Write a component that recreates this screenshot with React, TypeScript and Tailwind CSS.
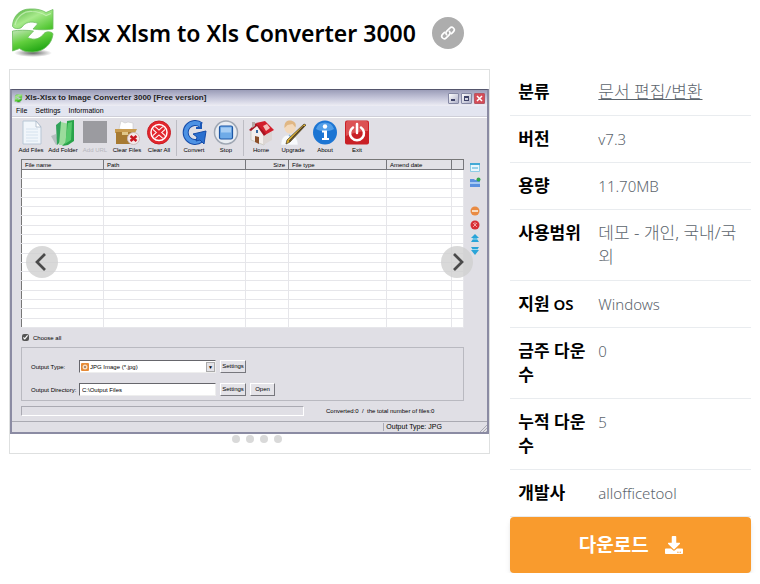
import React from 'react';
import { FaDownload } from 'react-icons/fa';

const RefreshLogo: React.FC<{ className: string; id: string }> = ({ className, id }) => (
  <svg viewBox="0 0 44 50" className={className} aria-hidden="true">
    <defs>
      <linearGradient id={`${id}-top`} x1="0" y1="0" x2="1" y2="1">
        <stop offset="0" stopColor="#4fae3c" />
        <stop offset="0.45" stopColor="#a8ea8c" />
        <stop offset="1" stopColor="#3fbf1f" />
      </linearGradient>
      <linearGradient id={`${id}-bottom`} x1="0" y1="0" x2="0.6" y2="1">
        <stop offset="0" stopColor="#c2e6b8" />
        <stop offset="0.5" stopColor="#62cf3e" />
        <stop offset="1" stopColor="#1fa512" />
      </linearGradient>
      <radialGradient id={`${id}-shadow`}>
        <stop offset="0" stopColor="#333" stopOpacity="0.75" />
        <stop offset="1" stopColor="#333" stopOpacity="0" />
      </radialGradient>
    </defs>
    <ellipse cx="22" cy="45" rx="19" ry="4" fill={`url(#${id}-shadow)`} />
    <path d="M1.500 18C2 8 9 1 19 1c7-.4 12 1 16 3.500l7-3V21c-6 1-14 1-20 0l5-5.500c-7-3-13-1-16 3.500-2 2.500-9 2-9.500-1z" fill={`url(#${id}-top)`} stroke="#6cbd5e" strokeWidth="0.8" />
    <path d="M42 26C41 36 33 43.500 22 44c-6 .2-10-1-13.500-3.500L1.500 43V23c6-1 14-1 21 0l-6 6.500c7 3.500 13 1 16.500-4 2-2.500 8.500-2 9 .5z" fill={`url(#${id}-bottom)`} stroke="#6cbd5e" strokeWidth="0.8" />
    <path d="M4 17C6 8 13 3 21 3.500c6 .2 10 1.500 14 4l5-2" fill="none" stroke="#d2f5c4" strokeWidth="1.200" opacity="0.7" />
  </svg>
);

const AddFilesIcon = () => (
  <svg viewBox="0 0 26 26" className="size-[26px]">
    <path d="M5 1h13l5 6v17H5z" fill="#f1f6fb" stroke="#b8c7d6" />
    <path d="M18 1v6h5z" fill="#fff" stroke="#a8b8c8" strokeWidth="0.8" />
    <path d="M8 9h12M8 12h12M8 15h12M8 18h12M8 21h12" stroke="#d5e2ee" />
  </svg>
);

const AddFolderIcon = () => (
  <svg viewBox="0 0 26 26" className="size-[26px]">
    <path d="M1 16l5-2 3 10-3 1z" fill="#b5bec0" />
    <path d="M6 5l5-4v20l-4 4z" fill="#31a35a" />
    <path d="M11 2l8 2-3 21H9z" fill="#9bdc9c" />
    <path d="M17 1l7-1v21l-6 4-6 1 4-4z" fill="#29a34a" />
    <path d="M18 3l4-1-1 18-6 4z" fill="#56c96c" />
  </svg>
);

const AddUrlIcon = () => (
  <svg viewBox="0 0 26 26" className="size-[26px]">
    <path d="M1 1h24v22H1z" fill="#9b9ba0" />
  </svg>
);

const ClearFilesIcon = () => (
  <svg viewBox="0 0 26 26" className="size-[26px]">
    <path d="M5 9l2-8 4 2 3-1 5 1v8z" fill="#fff" stroke="#c8c8c8" strokeWidth="0.600" />
    <path d="M1 9h22l-2 4H1z" fill="#c99c50" />
    <path d="M2 12h19v12H2z" fill="#a77a32" />
    <path d="M8 12h6v3H8z" fill="#e1c78a" />
    <circle cx="19.500" cy="18.500" r="6" fill="#f4e8e8" stroke="#cbb" />
    <path d="M16.500 16l6 5M22.500 16l-6 5" stroke="#c91520" strokeWidth="2.500" />
  </svg>
);

const ClearAllIcon = () => (
  <svg viewBox="0 0 26 26" className="size-[26px]">
    <circle cx="13" cy="12.500" r="11.500" fill="#e3262d" stroke="#c81e25" />
    <circle cx="13" cy="12.500" r="8" fill="none" stroke="#fff" strokeWidth="1.500" />
    <path d="M8 8l10 9M18 8L8 17" stroke="#fff" strokeWidth="4.500" />
    <path d="M8 8l10 9M18 8L8 17" stroke="#e3262d" strokeWidth="2.500" />
  </svg>
);

const ConvertIcon = () => (
  <svg viewBox="0 0 26 26" className="size-[26px]">
    <path d="M20 5A9.500 9.500 0 1 0 20 20" fill="none" stroke="#164ca9" strokeWidth="6" />
    <path d="M20 5A9.500 9.500 0 1 0 20 20" fill="none" stroke="#4d92e4" strokeWidth="4" />
    <path d="M12 14l13-3-2 13-4-4-4 1 1-4z" fill="#2b70cf" stroke="#164ca9" />
    <path d="M20 3v5h-5" fill="none" stroke="#1b57b6" strokeWidth="2" />
  </svg>
);

const StopIcon = () => (
  <svg viewBox="0 0 26 26" className="size-[26px]">
    <circle cx="13" cy="12.500" r="11.500" fill="#e9edf2" stroke="#9fa7b3" strokeWidth="1.500" />
    <rect x="6.500" y="6" width="13" height="13" rx="1.500" fill="#6fabe8" stroke="#1d57a5" strokeWidth="1.200" />
    <path d="M8 7.500h10v5H8z" fill="#a6cdf4" />
  </svg>
);

const HomeIcon = () => (
  <svg viewBox="0 0 26 26" className="size-[26px]">
    <path d="M3 10l6-6 7 8v13L3 20z" fill="#f3efed" stroke="#bba" strokeWidth="0.600" />
    <path d="M15 14l9-4v10l-9 5z" fill="#dcd6d4" />
    <path d="M8 3l9-2 9 9-9 5z" fill="#d21f2c" />
    <path d="M8 3L1 10l2 1 6-5 7 10 2-2z" fill="#a81521" />
    <path d="M15 6l4-2 3 4-4 3z" fill="#f5c0ba" />
    <path d="M4 2h3v4L4 8z" fill="#b5aaa6" />
    <path d="M7 16l4 1v7l-4-2z" fill="#8b4e28" />
    <path d="M8 10h2v3H8z" fill="#396ba0" />
  </svg>
);

const UpgradeIcon = () => (
  <svg viewBox="0 0 26 26" className="size-[26px]">
    <path d="M1 25c0-7 3-10 8-10s9 3 9 10z" fill="#f8fafc" stroke="#dde3e8" strokeWidth="0.600" />
    <circle cx="10" cy="8" r="5.500" fill="#f3d9bb" />
    <path d="M4.500 8C4 2 7 .5 10 .5s7 2 5.500 7l-3-3.500-5 1z" fill="#e0b784" />
    <path d="M9 15l2 2-1 4" fill="none" stroke="#8dbbe0" strokeWidth="1.500" />
    <path d="M26 5L10 22l-4 2 1-4L24 4z" fill="#e9ba31" stroke="#3e3424" strokeWidth="0.700" />
    <path d="M24 6L9 21.500" stroke="#493b2a" strokeWidth="1.200" />
  </svg>
);

const AboutIcon = () => (
  <svg viewBox="0 0 26 26" className="size-[26px]">
    <circle cx="13" cy="12.500" r="12" fill="#1c75d3" />
    <path d="M4 9a9.500 9.500 0 0 1 18 0c-5 3-13 3-18 0z" fill="#5fa9ee" opacity="0.8" />
    <circle cx="13" cy="6.500" r="2.200" fill="#fff" />
    <path d="M10 10.500h5V18h2v2h-7v-2h2v-5.500h-2z" fill="#fff" />
  </svg>
);

const ExitIcon = () => (
  <svg viewBox="0 0 26 26" className="size-[26px]">
    <rect x="1" y="0.500" width="24" height="24" rx="2" fill="#c92026" />
    <path d="M2 3q0-2 2-2h18q2 0 2 2v8Q13 11 2 16z" fill="#dc5254" />
    <path d="M9 7.500a7 7 0 1 0 8 0M13 4v9" fill="none" stroke="#fff" strokeWidth="2.500" strokeLinecap="round" />
  </svg>
);

const tools = [
  { label: 'Add Files', icon: AddFilesIcon },
  { label: 'Add Folder', icon: AddFolderIcon },
  { label: 'Add URL', icon: AddUrlIcon, disabled: true },
  { label: 'Clear Files', icon: ClearFilesIcon },
  { label: 'Clear All', icon: ClearAllIcon },
  { label: 'Convert', icon: ConvertIcon, divider: true },
  { label: 'Stop', icon: StopIcon },
  { label: 'Home', icon: HomeIcon, divider: true },
  { label: 'Upgrade', icon: UpgradeIcon },
  { label: 'About', icon: AboutIcon },
  { label: 'Exit', icon: ExitIcon },
];

const columns = [
  { label: 'File name', width: 'w-[82px]' },
  { label: 'Path', width: 'w-[142px]' },
  { label: 'Size', width: 'w-[43px] text-right' },
  { label: 'File type', width: 'w-[98px]' },
  { label: 'Amend date', width: 'w-[65px]' },
  { label: '', width: '' },
];

const emptyRows = Array.from({ length: 17 }, (_, i) => i);

const info = [
  { label: '분류', value: '문서 편집/변환', link: true },
  { label: '버전', value: 'v7.3', latin: true },
  { label: '용량', value: '11.70MB', latin: true },
  { label: '사용범위', value: '데모 - 개인, 국내/국외' },
  { label: '지원 OS', value: 'Windows', latin: true },
  { label: '금주 다운수', value: '0', latin: true },
  { label: '누적 다운수', value: '5', latin: true },
  { label: '개발사', value: 'allofficetool', latin: true },
];

const SideIcons = () => (
  <svg viewBox="0 0 12 100" className="h-[100px] w-3" aria-hidden="true">
    <path d="M1.500 4.500h9v8h-9z" fill="#e8f6fc" stroke="#8ccbe4" />
    <path d="M1 4h10v2H1zM3 8.500h6v1H3z" fill="#42a9d5" />
    <path d="M1 20h4l1 1h5v7H1z" fill="#5b91df" />
    <path d="M1 23h10v2H1z" fill="#a6c9f4" />
    <circle cx="9.500" cy="20.500" r="2" fill="#32a64c" />
    <circle cx="6" cy="52" r="4.500" fill="#e98b43" />
    <path d="M3 51h6v2H3z" fill="#f8dcc0" />
    <circle cx="6" cy="66" r="4.500" fill="#d72f35" />
    <path d="M4 64l4 4M6 63v4M8 64l-4 4" stroke="#f7b5b5" strokeWidth="0.800" />
    <path d="M6 75l4 4H8v1l2 3H2l2-3v-1H2z" fill="#2aa4d8" />
    <path d="M3 80h6" stroke="#9edcf2" />
    <path d="M2 88h8l-2 3h2l-4 5-4-5h2z" fill="#2aa4d8" />
    <path d="M3 90.500h6" stroke="#9edcf2" />
  </svg>
);

const winButton = 'h-[13px] border border-t-white border-l-white border-r-[#77777d] border-b-[#77777d] bg-[#e4e3e8] text-center leading-[11px]';
const field = 'h-[13px] w-[137px] border border-t-[#66666c] border-l-[#66666c] border-r-[#eee] border-b-[#eee] bg-white';

const ConverterWindow: React.FC = () => (
  <div className="w-full border-x-2 border-t border-b-2 border-[#8b8ba3] border-t-[#55566c] bg-[#e0dfe5] font-['Liberation_Sans',sans-serif] text-[6px] leading-[8px] text-black">
    <div className="flex h-4 items-center gap-[2px] bg-linear-to-b from-[#9b9db8] via-[#c5c6da] to-[#eeeef5] px-[2px]">
      <RefreshLogo id="small" className="size-[9px]" />
      <span className="grow text-[8px] font-bold text-[#222]">Xls-Xlsx to Image Converter 3000 [Free version]</span>
      <div className="flex gap-[2px]">
        <button aria-label="Minimize" className="flex size-[11px] items-end rounded-[1px] border border-[#8588a4] bg-linear-to-br from-white to-[#aeb0c8] p-[2px]">
          <span className="h-[2px] w-1 bg-[#404469]" />
        </button>
        <button aria-label="Maximize" className="size-[11px] rounded-[1px] border border-[#8588a4] bg-linear-to-br from-white to-[#aeb0c8] p-[2px]">
          <span className="block h-[5px] border border-t-2 border-[#404469]" />
        </button>
        <button aria-label="Close" className="size-[11px] rounded-[1px] border border-[#b65563] bg-[#d54c57]">
          <svg viewBox="0 0 9 9" className="size-[9px]"><path d="M2 2l5 5M7 2L2 7" stroke="#fff" strokeWidth="1.500" /></svg>
        </button>
      </div>
    </div>
    <nav className="flex h-[11px] items-center gap-2 border-b border-[#cfcfd8] bg-[#e3e5f0] px-1 text-[7px]">
      <span>File</span>
      <span>Settings</span>
      <span>Information</span>
    </nav>
    <div className="flex h-[42px] items-start border-t border-white pt-[2px] pl-[3px]">
      {tools.map(({ label, icon: Icon, disabled, divider }) => (
        <React.Fragment key={label}>
          {divider && <span className="mx-px h-9 w-px bg-[#bdbdc4]" />}
          <button disabled={disabled} className={`flex w-8 shrink-0 flex-col items-center whitespace-nowrap ${disabled ? 'text-[#b6b6bc]' : ''}`}>
            <Icon />
            <span>{label}</span>
          </button>
        </React.Fragment>
      ))}
    </div>
    <div className="flex gap-[5px] pl-[9px]">
      <table className="h-[169px] w-full table-fixed border-collapse border-t border-l border-[#777] bg-white">
        <thead>
          <tr className="h-[10px] bg-[#e2e1e6]">
            {columns.map((column) => (
              <th key={column.label} className={`h-[10px] border-r border-b border-[#77777c] px-[3px] py-0 text-left font-normal ${column.width}`}>{column.label}</th>
            ))}
          </tr>
        </thead>
        <tbody>
          {emptyRows.map((row) => (
            <tr key={row}>
              {columns.map((column) => (
                <td key={column.label} className="border-r border-b border-[#e6e6ea] p-0" />
              ))}
            </tr>
          ))}
        </tbody>
      </table>
      <div className="w-[18px] shrink-0"><SideIcons /></div>
    </div>
    <label className="flex h-[19px] items-center gap-1 pl-[10px]">
      <input type="checkbox" defaultChecked className="size-[7px] accent-[#555]" />
      Choose all
    </label>
    <div className="mr-[23px] ml-[9px] flex h-[54px] flex-col justify-center gap-[10px] border border-[#b9b9c0] pt-2 pl-[9px]">
      <div className="flex items-center">
        <label htmlFor="output-type" className="w-12">Output Type:</label>
        <div className={`flex items-center ${field}`}>
          <svg viewBox="0 0 10 10" className="size-[10px] shrink-0"><rect x="1" y="1" width="8" height="8" rx="1" fill="#e68a36" /><circle cx="5" cy="5" r="2.500" fill="#f7dec0" /><circle cx="5" cy="5" r="1" fill="#947060" /></svg>
          <select id="output-type" className="h-[11px] min-w-0 grow appearance-none text-[6px]">
            <option>JPG Image (*.jpg)</option>
          </select>
          <span className="w-[9px] border border-[#aaa] bg-[#e4e3e8] text-center text-[5px]">▼</span>
        </div>
        <button className={`ml-1 w-[26px] ${winButton}`}>Settings</button>
      </div>
      <div className="flex items-center">
        <label htmlFor="output-dir" className="w-12 whitespace-nowrap">Output Directory:</label>
        <input id="output-dir" defaultValue="C:\Output Files" className={`px-[2px] ${field}`} />
        <button className={`ml-1 w-[26px] ${winButton}`}>Settings</button>
        <button className={`ml-1 w-[25px] ${winButton}`}>Open</button>
      </div>
    </div>
    <div className="flex h-5 items-center gap-[22px] pl-[9px]">
      <div className="h-[10px] w-[283px] border border-t-[#aaaab2] border-l-[#aaaab2] border-r-white border-b-white" />
      <span className="whitespace-nowrap">Converted:0 &nbsp;/ &nbsp;the total number of files:0</span>
    </div>
    <div className="flex h-[11px] items-center border-t border-[#aaaab2] text-[7px]">
      <span className="grow" />
      <span className="w-[97px] border-l border-[#aaaab2] pl-[2px]">Output Type: JPG</span>
      <svg viewBox="0 0 7 7" className="size-[7px] self-end"><path d="M0 7l7-7M3 7l4-4M6 7l1-1" stroke="#aaaab2" /></svg>
    </div>
  </div>
);

const arrow = 'absolute top-1/2 flex size-8 -translate-y-1/2 items-center justify-center rounded-full bg-[#d0d0d0]/80';

const App: React.FC = () => {
  return (
    <main className="bg-white px-[9px] font-['Noto_Sans','Noto_Sans_CJK_KR',sans-serif] text-black">
      <header className="flex h-[69px] items-center gap-4 pb-[3px]">
        <div className="flex items-center gap-[10px]">
          <RefreshLogo id="large" className="ml-[2px] h-[50px] w-11" />
          <h1 className="text-[23px] leading-8 font-semibold whitespace-nowrap">Xlsx Xlsm to Xls Converter 3000</h1>
        </div>
        <button aria-label="Copy link" className="flex size-8 items-center justify-center rounded-full bg-[#adadad] text-white">
          <svg viewBox="0 0 16 16" className="size-4" fill="none" stroke="currentColor" strokeWidth="1.700" strokeLinecap="round" strokeLinejoin="round">
            <path d="M6.600 9.600a2.600 2.600 0 0 1 .2-3.500l3-3a2.500 2.500 0 0 1 3.700 3.500l-2 2.100" />
            <path d="M9.400 6.400a2.600 2.600 0 0 1-.2 3.500l-3 3a2.500 2.500 0 0 1-3.700-3.500l2-2.100" />
          </svg>
        </button>
      </header>

      <div className="grid grid-cols-[2fr_1fr] items-start gap-5">
        <section className="relative border border-[#dee0e0] py-[19px]">
          <ConverterWindow />
          <button aria-label="Previous" className={`left-4 ${arrow}`}>
            <svg viewBox="0 0 20 20" className="size-5"><path d="M13 2L5 10l8 8" fill="none" stroke="#4a4a4a" strokeWidth="2.700" /></svg>
          </button>
          <button aria-label="Next" className={`right-4 ${arrow}`}>
            <svg viewBox="0 0 20 20" className="size-5"><path d="M7 2l8 8-8 8" fill="none" stroke="#4a4a4a" strokeWidth="2.700" /></svg>
          </button>
          <div className="absolute inset-x-0 bottom-[10px] flex justify-center gap-[6px]">
            <span className="size-2 rounded-full bg-white" />
            <span className="size-2 rounded-full bg-[#d9d9d9]" />
            <span className="size-2 rounded-full bg-[#d9d9d9]" />
            <span className="size-2 rounded-full bg-[#d9d9d9]" />
            <span className="size-2 rounded-full bg-[#d9d9d9]" />
          </div>
        </section>

        <aside>
          <table className="w-full table-fixed border-collapse text-[17px] leading-6">
            <tbody>
              {info.map((item) => (
                <tr key={item.label} className="border-b border-[#e9ecef] align-top">
                  <th className="w-20 py-[11px] pr-1 pl-2 text-left font-semibold">
                    {item.label.split(' OS')[0]}
                    {item.label.endsWith('OS') && <span className="text-[15px]"> OS</span>}
                  </th>
                  <td className={`px-2 py-[11px] font-light break-all text-[#5c656d] ${item.latin ? 'text-[15px]' : ''}`}>
                    {item.link ? <a href="#" className="underline">{item.value}</a> : item.value}
                  </td>
                </tr>
              ))}
            </tbody>
          </table>
          <button className="flex h-14 w-full items-center justify-center gap-4 rounded bg-[#f99b2d] text-[19px] font-semibold text-white shadow-md">
            다운로드
            <FaDownload size={18} />
          </button>
        </aside>
      </div>
    </main>
  );
};

export default App;
